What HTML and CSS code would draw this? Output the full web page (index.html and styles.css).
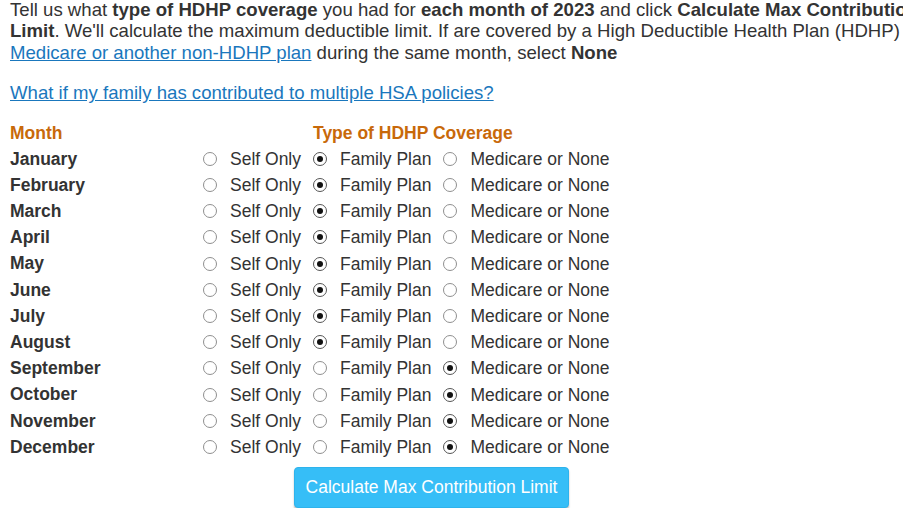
FILE: index.html
```html
<!DOCTYPE html>
<html lang="en">
<head>
<meta charset="utf-8">
<title>HSA Contribution Limit</title>
<link rel="stylesheet" href="styles.css">
</head>
<body>
<div class="page">
  <p class="intro">Tell us what <b>type of HDHP coverage</b> you had for <b>each month of 2023</b> and click <b>Calculate Max Contribution Limit</b>. We'll calculate the maximum deductible limit. If are covered by a High Deductible Health Plan (HDHP) and <a href="#">Medicare or another non-HDHP plan</a> during the same month, select <b>None</b></p>
  <p class="faq"><a href="#">What if my family has contributed to multiple HSA policies?</a></p>

  <div class="grid">
    <div class="head month-head">Month</div>
    <div class="head type-head">Type of HDHP Coverage</div>

    <div class="month">January</div>
    <div class="opts"><label class="opt"><input type="radio" name="m1"> Self Only</label><label class="opt"><input type="radio" name="m1" checked> Family Plan</label><label class="opt"><input type="radio" name="m1"> Medicare or None</label></div>

    <div class="month">February</div>
    <div class="opts"><label class="opt"><input type="radio" name="m2"> Self Only</label><label class="opt"><input type="radio" name="m2" checked> Family Plan</label><label class="opt"><input type="radio" name="m2"> Medicare or None</label></div>

    <div class="month">March</div>
    <div class="opts"><label class="opt"><input type="radio" name="m3"> Self Only</label><label class="opt"><input type="radio" name="m3" checked> Family Plan</label><label class="opt"><input type="radio" name="m3"> Medicare or None</label></div>

    <div class="month">April</div>
    <div class="opts"><label class="opt"><input type="radio" name="m4"> Self Only</label><label class="opt"><input type="radio" name="m4" checked> Family Plan</label><label class="opt"><input type="radio" name="m4"> Medicare or None</label></div>

    <div class="month">May</div>
    <div class="opts"><label class="opt"><input type="radio" name="m5"> Self Only</label><label class="opt"><input type="radio" name="m5" checked> Family Plan</label><label class="opt"><input type="radio" name="m5"> Medicare or None</label></div>

    <div class="month">June</div>
    <div class="opts"><label class="opt"><input type="radio" name="m6"> Self Only</label><label class="opt"><input type="radio" name="m6" checked> Family Plan</label><label class="opt"><input type="radio" name="m6"> Medicare or None</label></div>

    <div class="month">July</div>
    <div class="opts"><label class="opt"><input type="radio" name="m7"> Self Only</label><label class="opt"><input type="radio" name="m7" checked> Family Plan</label><label class="opt"><input type="radio" name="m7"> Medicare or None</label></div>

    <div class="month">August</div>
    <div class="opts"><label class="opt"><input type="radio" name="m8"> Self Only</label><label class="opt"><input type="radio" name="m8" checked> Family Plan</label><label class="opt"><input type="radio" name="m8"> Medicare or None</label></div>

    <div class="month">September</div>
    <div class="opts"><label class="opt"><input type="radio" name="m9"> Self Only</label><label class="opt"><input type="radio" name="m9"> Family Plan</label><label class="opt"><input type="radio" name="m9" checked> Medicare or None</label></div>

    <div class="month">October</div>
    <div class="opts"><label class="opt"><input type="radio" name="m10"> Self Only</label><label class="opt"><input type="radio" name="m10"> Family Plan</label><label class="opt"><input type="radio" name="m10" checked> Medicare or None</label></div>

    <div class="month">November</div>
    <div class="opts"><label class="opt"><input type="radio" name="m11"> Self Only</label><label class="opt"><input type="radio" name="m11"> Family Plan</label><label class="opt"><input type="radio" name="m11" checked> Medicare or None</label></div>

    <div class="month">December</div>
    <div class="opts"><label class="opt"><input type="radio" name="m12"> Self Only</label><label class="opt"><input type="radio" name="m12"> Family Plan</label><label class="opt"><input type="radio" name="m12" checked> Medicare or None</label></div>
  </div>

  <div class="actions">
    <button class="calc" type="button">Calculate Max Contribution Limit</button>
  </div>
</div>
</body>
</html>
```

FILE: styles.css
```css
html, body {
  margin: 0;
  padding: 0;
  overflow: hidden;
  background: #fff;
}
body {
  font-family: "Liberation Sans", Arial, sans-serif;
  color: #333;
  font-size: 18px;
}
.page {
  width: 1000px;
  padding: 0 0 0 10px;
}
.intro {
  width: 940px;
  margin: -1px 0 0;
  font-size: 18.6px;
  line-height: 21.4px;
}
a {
  color: #1a77bd;
  text-decoration: underline;
}
.faq {
  margin: 19px 0 0;
  font-size: 18.6px;
  line-height: 22px;
}
.grid {
  display: grid;
  grid-template-columns: 193px auto;
  margin-top: 15.5px;
}
.head {
  color: #c8690a;
  font-weight: bold;
  font-size: 17.5px;
  line-height: 26px;
}
.type-head {
  padding-left: 110px;
}
.month {
  font-weight: bold;
  font-size: 17.5px;
  line-height: 26.2px;
  height: 26.2px;
}
.opts {
  display: flex;
  align-items: center;
  gap: 12px;
  height: 26.2px;
}
.opt {
  display: flex;
  align-items: center;
  gap: 13px;
  font-size: 17.5px;
  line-height: 26px;
  color: #333;
}
.opt input {
  appearance: none;
  -webkit-appearance: none;
  margin: 0;
  width: 14px;
  height: 14px;
  border: 1px solid #8f8f8f;
  border-radius: 50%;
  background: #fff;
  position: relative;
  box-sizing: border-box;
}
.opt input:checked {
  border-color: #555;
}
.opt input:checked::after {
  content: "";
  position: absolute;
  left: 3px;
  top: 3px;
  width: 6px;
  height: 6px;
  border-radius: 50%;
  background: #111;
}
.actions {
  padding: 7px 0 0 284px;
}
.calc {
  font-family: "Liberation Sans", Arial, sans-serif;
  font-size: 17.5px;
  color: #fff;
  background: #36bef7;
  border: 1px solid #2eb3ec;
  border-radius: 4px;
  width: 275px;
  height: 41px;
  padding: 0;
  box-shadow: 0 2px 2px rgba(0, 0, 0, 0.25);
}
```
